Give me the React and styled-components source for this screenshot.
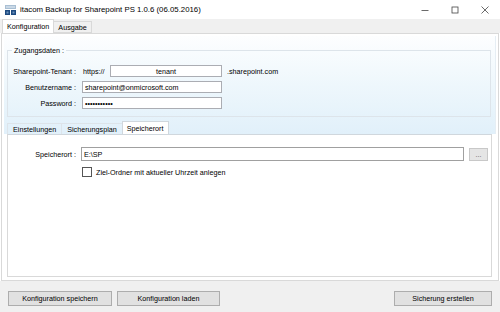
import React from "react";
import styled, { createGlobalStyle } from "styled-components";

const Global = createGlobalStyle`
  html, body { margin: 0; padding: 0; background: #ffffff; }
  body { font-family: "Liberation Sans", Arial, sans-serif; font-size: 7.2px; color: #000; }
  * { box-sizing: border-box; }
`;

const Window = styled.div`
  width: 500px;
  height: 312px;
  display: flex;
  flex-direction: column;
  background: #ffffff;
  overflow: hidden;
`;

const TitleBar = styled.div`
  height: 19px;
  display: flex;
  align-items: center;
  padding-left: 5px;
  background: #ffffff;
`;

const Title = styled.span`
  font-size: 7.8px;
  margin-left: 4px;
  color: #000;
  flex: 1;
  white-space: nowrap;
`;

const Controls = styled.div`
  display: flex;
  height: 100%;
`;

const ControlButton = styled.div`
  width: 30px;
  height: 100%;
  display: flex;
  align-items: center;
  justify-content: center;
`;

const MainTabStrip = styled.div`
  height: 14px;
  display: flex;
  align-items: flex-end;
  padding-left: 2px;
  background: #f0f0f0;
`;

const MainTab = styled.div`
  height: ${(p) => (p.$active ? "14px" : "12px")};
  padding: 0 4px;
  display: flex;
  align-items: center;
  background: ${(p) => (p.$active ? "#ffffff" : "#f0f0f0")};
  border: 1px solid #d9d9d9;
  border-bottom: ${(p) => (p.$active ? "none" : "1px solid #d9d9d9")};
  margin-left: ${(p) => (p.$active ? "0" : "-1px")};
  position: relative;
  z-index: ${(p) => (p.$active ? 1 : 0)};
  white-space: nowrap;
`;

const ConfigPage = styled.div`
  flex: 1;
  margin: 0 1px;
  border: 1px solid #d9d9d9;
  background: #ffffff;
  padding: 2px 2px 3px;
  display: flex;
  flex-direction: column;
`;

const BluePanel = styled.div`
  background: linear-gradient(to bottom, #fdfeff 0%, #eef7fc 50%, #e1f0fa 100%);
  padding: 10px 4px 0 3px;
  display: flex;
  flex-direction: column;
  border-right: 1px solid #e6eef4;
`;

const Group = styled.fieldset`
  margin: 0;
  padding: 10px 0 7px 0;
  border: 1px solid #dde4ea;
  display: flex;
  flex-direction: column;
  gap: 4px;
`;

const Legend = styled.legend`
  padding: 0 2px;
  margin-left: 4px;
  line-height: 9px;
  font-size: 7.2px;
`;

const Row = styled.div`
  display: flex;
  align-items: center;
  height: ${(p) => p.$h || 12}px;
  gap: ${(p) => p.$gap || 6}px;
`;

const Label = styled.span`
  width: 68px;
  text-align: right;
  white-space: nowrap;
  flex: none;
`;

const Prefix = styled.span`
  width: 27px;
  margin-left: 1px;
  margin-right: -6px;
  white-space: nowrap;
`;

const Suffix = styled.span`
  margin-left: -1px;
  white-space: nowrap;
`;

const TextInput = styled.input`
  width: ${(p) => (p.$w ? `${p.$w}px` : "auto")};
  flex: ${(p) => (p.$grow ? 1 : "none")};
  height: ${(p) => p.$h || 12}px;
  border: 1px solid ${(p) => p.$border || "#abadb3"};
  background: #ffffff;
  font-family: "Liberation Sans", Arial, sans-serif;
  font-size: 7.2px;
  padding: 0 2px;
  margin: 0;
  text-align: ${(p) => (p.$center ? "center" : "left")};
  color: #000;
  outline: none;
`;

const SubTabStrip = styled.div`
  display: flex;
  align-items: flex-end;
  margin-top: 4px;
  height: 13px;
`;

const SubTab = styled.div`
  height: ${(p) => (p.$active ? "13px" : "11px")};
  padding: 0 ${(p) => (p.$active ? "4px" : "5px")};
  display: flex;
  align-items: center;
  background: ${(p) => (p.$active ? "#ffffff" : "transparent")};
  border: 1px solid ${(p) => (p.$active ? "#d0d7dd" : "#dde4ea")};
  border-bottom: none;
  margin-left: ${(p) => (p.$first ? "0" : "-1px")};
  white-space: nowrap;
`;

const SubPage = styled.div`
  flex: 1;
  margin: 0 4px 0 3px;
  border: 1px solid #d9d9d9;
  border-top: 1px solid #d0d7dd;
  background: #ffffff;
  padding: 12px 3px 0 0;
  display: flex;
  flex-direction: column;
  gap: 6px;
`;

const BrowseButton = styled.button`
  width: 19px;
  height: 13px;
  flex: none;
  border: 1px solid #c8c8c8;
  background: #e5e5e5;
  font-family: "Liberation Sans", Arial, sans-serif;
  font-size: 7px;
  color: #555;
  padding: 0;
  margin: 0;
  line-height: 9px;
`;

const CheckRow = styled.label`
  display: flex;
  align-items: center;
  gap: 4px;
  margin-left: 74px;
  height: 10px;
`;

const CheckBox = styled.span`
  width: 10px;
  height: 10px;
  border: 1px solid #555555;
  background: #ffffff;
  flex: none;
`;

const BottomBar = styled.div`
  height: 31px;
  flex: none;
  background: #f0f0f0;
  display: flex;
  align-items: flex-start;
  padding: 10px 8px 0 8px;
  gap: 5px;
`;

const Button = styled.button`
  width: ${(p) => p.$w}px;
  height: 15px;
  margin-left: ${(p) => (p.$push ? "auto" : "0")};
  border: 1px solid #adadad;
  background: #e1e1e1;
  font-family: "Liberation Sans", Arial, sans-serif;
  font-size: 7.2px;
  color: #000;
  padding: 0;
`;

function AppIcon() {
  return (
    <svg width="11" height="10" viewBox="0 0 11 10">
      <rect x="0" y="0" width="11" height="4" fill="#a9bfd3" />
      <rect x="1" y="1" width="9" height="2" fill="#c9d8e6" />
      <rect x="0" y="5" width="5" height="5" fill="#1d4a80" />
      <rect x="6" y="5" width="5" height="5" fill="#1d4a80" />
      <rect x="1.5" y="6.5" width="2" height="2" fill="#6f93bd" />
      <rect x="7.5" y="6.5" width="2" height="2" fill="#6f93bd" />
    </svg>
  );
}

export default function App() {
  return (
    <>
      <Global />
      <Window>
        <TitleBar>
          <AppIcon />
          <Title>itacom Backup for Sharepoint PS 1.0.6 (06.05.2016)</Title>
          <Controls>
            <ControlButton>
              <svg width="8" height="8" viewBox="0 0 8 8">
                <line x1="0.5" y1="4.5" x2="7.5" y2="4.5" stroke="#444" strokeWidth="0.8" />
              </svg>
            </ControlButton>
            <ControlButton>
              <svg width="8" height="8" viewBox="0 0 8 8">
                <rect x="1" y="1" width="6" height="6" fill="none" stroke="#444" strokeWidth="0.8" />
              </svg>
            </ControlButton>
            <ControlButton>
              <svg width="8" height="8" viewBox="0 0 8 8">
                <line x1="0.5" y1="0.5" x2="7.5" y2="7.5" stroke="#444" strokeWidth="0.8" />
                <line x1="7.5" y1="0.5" x2="0.5" y2="7.5" stroke="#444" strokeWidth="0.8" />
              </svg>
            </ControlButton>
          </Controls>
        </TitleBar>

        <MainTabStrip>
          <MainTab $active>Konfiguration</MainTab>
          <MainTab>Ausgabe</MainTab>
        </MainTabStrip>

        <ConfigPage>
          <BluePanel>
            <Group>
              <Legend>Zugangsdaten :</Legend>
              <Row>
                <Label>Sharepoint-Tenant :</Label>
                <Prefix>https://</Prefix>
                <TextInput $w={112} $center defaultValue="tenant" />
                <Suffix>.sharepoint.com</Suffix>
              </Row>
              <Row>
                <Label>Benutzername :</Label>
                <TextInput $w={140} defaultValue="sharepoint@onmicrosoft.com" />
              </Row>
              <Row>
                <Label>Password :</Label>
                <TextInput $w={140} type="password" defaultValue="xxxxxxxxxxx" />
              </Row>
            </Group>
            <SubTabStrip>
              <SubTab $first>Einstellungen</SubTab>
              <SubTab>Sicherungsplan</SubTab>
              <SubTab $active>Speicherort</SubTab>
            </SubTabStrip>
          </BluePanel>

          <SubPage>
            <Row $h={14} $gap={5}>
              <Label>Speicherort :</Label>
              <TextInput $grow $h={14} $border="#a0a0a0" defaultValue="E:\SP" />
              <BrowseButton>...</BrowseButton>
            </Row>
            <CheckRow>
              <CheckBox />
              <span>Ziel-Ordner mit aktueller Uhrzeit anlegen</span>
            </CheckRow>
          </SubPage>
        </ConfigPage>

        <BottomBar>
          <Button $w={104}>Konfiguration speichern</Button>
          <Button $w={103}>Konfiguration laden</Button>
          <Button $w={98} $push>Sicherung erstellen</Button>
        </BottomBar>
      </Window>
    </>
  );
}
